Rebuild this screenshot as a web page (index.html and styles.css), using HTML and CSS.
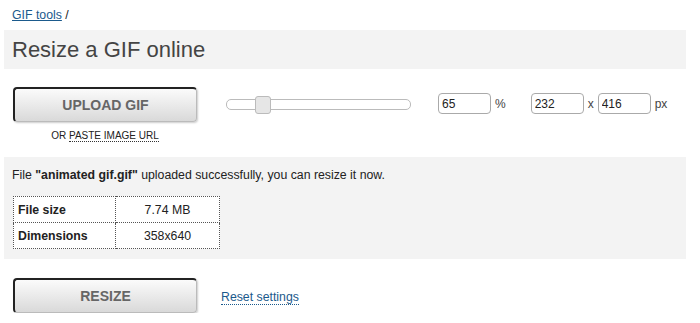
FILE: index.html
```html
<!DOCTYPE html>
<html lang="en">
<head>
  <meta charset="UTF-8" />
  <title>Resize a GIF online</title>
  <link rel="stylesheet" href="styles.css">
</head>
<body>
  <div class="page">
    <div class="crumbs"><a href="#">GIF tools</a> /</div>
    <h1 class="title">Resize a GIF online</h1>

    <div class="controls">
      <div class="upload">
        <button class="btn">UPLOAD GIF</button>
        <div class="paste">OR <span class="dotted">PASTE IMAGE URL</span></div>
      </div>
      <div class="slider">
        <div class="track"><div class="thumb"></div></div>
      </div>
      <div class="fields">
        <input class="num" type="text" value="65" />
        <span class="unit">%</span>
        <input class="num gap" type="text" value="232" />
        <span class="unit">x</span>
        <input class="num" type="text" value="416" />
        <span class="unit">px</span>
      </div>
    </div>

    <div class="info">
      <p>File <b>"animated gif.gif"</b> uploaded successfully, you can resize it now.</p>
      <table class="stats">
        <tr><th>File size</th><td>7.74 MB</td></tr>
        <tr><th>Dimensions</th><td>358x640</td></tr>
      </table>
    </div>

    <div class="actions">
      <button class="btn">RESIZE</button>
      <a class="reset" href="#">Reset settings</a>
    </div>
  </div>
</body>
</html>
```
FILE: styles.css
```css
body {
  margin: 0;
  font-family: "Liberation Sans", Arial, sans-serif;
  font-size: 12px;
  color: #222;
  background: #fff;
}

.page {
  padding: 8px 14px 0 4px;
}

.crumbs {
  padding-left: 8px;
  height: 22px;
  line-height: 15px;
  font-size: 12.3px;
}

.crumbs a {
  color: #1b5a8c;
}

.title {
  margin: 0;
  background: #f3f3f3;
  font-size: 22px;
  font-weight: normal;
  color: #444;
  padding: 8px 8px 8px 8px;
  line-height: 23px;
}

.controls {
  display: flex;
  align-items: flex-start;
  padding: 18px 0 0 9px;
  height: 70px;
}

.upload {
  width: 184px;
  text-align: center;
}

.btn {
  display: block;
  width: 184px;
  height: 35px;
  border: 1px solid #bbb;
  border-left: 2px solid #222;
  border-top: 2px solid #222;
  border-radius: 4px;
  background: linear-gradient(#fbfbfb, #d9d9d9);
  box-shadow: 1px 1px 2px rgba(0, 0, 0, 0.2);
  font-family: "Liberation Sans", Arial, sans-serif;
  font-size: 14px;
  font-weight: bold;
  color: #666;
  cursor: pointer;
}

.paste {
  margin-top: 8px;
  font-size: 10px;
  color: #222;
}

.dotted {
  border-bottom: 1px dotted #333;
}

.slider {
  margin: 12px 0 0 29px;
  width: 185px;
}

.track {
  position: relative;
  height: 9px;
  border: 1px solid #bbb;
  border-radius: 5px;
  background: #fff;
}

.thumb {
  position: absolute;
  left: 28px;
  top: -4px;
  width: 14px;
  height: 16px;
  border: 1px solid #bbb;
  border-radius: 3px;
  background: #e6e6e6;
}

.fields {
  display: flex;
  align-items: center;
  margin: 6px 0 0 27px;
}

.num {
  width: 45px;
  height: 17px;
  padding: 1px 3px;
  border: 1px solid #aaa;
  border-radius: 4px;
  font-family: "Liberation Sans", Arial, sans-serif;
  font-size: 12px;
  color: #222;
}

.num.gap {
  margin-left: 21px;
}

.unit {
  margin: 0 4px;
  color: #444;
}

.info {
  background: #f3f3f3;
  padding: 11px 8px 10px 8px;
}

.info p {
  margin: 0 0 14px;
  font-size: 12.3px;
}

.stats {
  border-collapse: collapse;
  background: #fff;
  margin-left: 1px;
}

.stats th,
.stats td {
  border: 1px dotted #555;
  height: 25px;
  padding: 0 4px;
  font-size: 12.3px;
}

.stats th {
  width: 93px;
  text-align: left;
}

.stats td {
  width: 95px;
  text-align: center;
}

.actions {
  display: flex;
  align-items: center;
  padding: 19px 0 0 9px;
}

.reset {
  margin-left: 24px;
  margin-top: 4px;
  font-size: 12.3px;
  color: #1b5a8c;
  text-decoration: none;
  border-bottom: 1px dotted #1b5a8c;
}
```
